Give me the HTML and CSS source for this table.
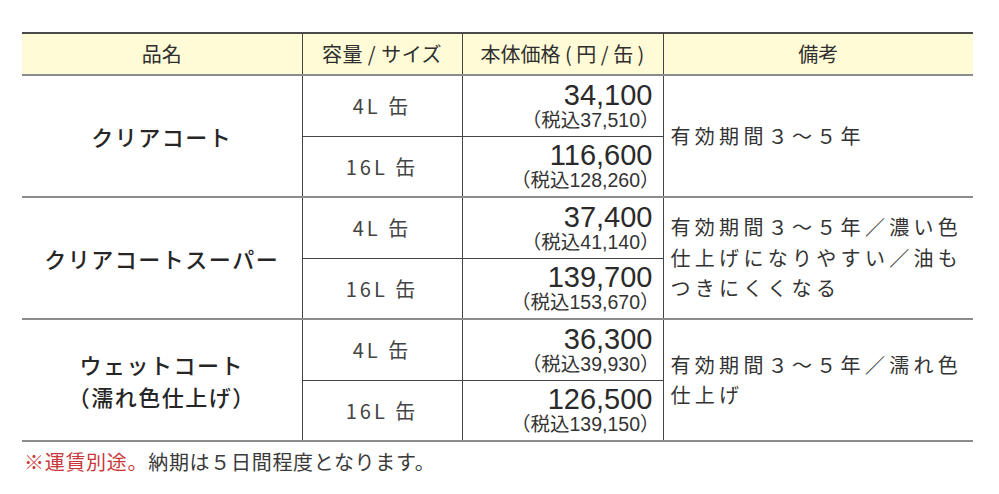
FILE: index.html
```html
<!DOCTYPE html>
<html lang="ja">
<head>
<meta charset="utf-8">
<link rel="stylesheet" href="styles.css">
</head>
<body>
<table class="price-table">
  <colgroup>
    <col class="c-name"><col class="c-size"><col class="c-price"><col class="c-note">
  </colgroup>
  <thead>
    <tr>
      <th>品名</th>
      <th class="th-size">容量 / サイズ</th>
      <th class="th-price">本体価格 ( 円 / 缶 )</th>
      <th>備考</th>
    </tr>
  </thead>
  <tbody class="group">
    <tr>
      <td class="name" rowspan="2">クリアコート</td>
      <td class="size">4L 缶</td>
      <td class="price"><div class="main">34,100</div><div class="tax">（税込37,510）</div></td>
      <td class="note" rowspan="2">有効期間３～５年</td>
    </tr>
    <tr class="sub">
      <td class="size">16L 缶</td>
      <td class="price"><div class="main">116,600</div><div class="tax">（税込128,260）</div></td>
    </tr>
  </tbody>
  <tbody class="group">
    <tr>
      <td class="name" rowspan="2">クリアコートスーパー</td>
      <td class="size">4L 缶</td>
      <td class="price"><div class="main">37,400</div><div class="tax">（税込41,140）</div></td>
      <td class="note" rowspan="2">有効期間３～５年／濃い色仕上げになりやすい／油もつきにくくなる</td>
    </tr>
    <tr class="sub">
      <td class="size">16L 缶</td>
      <td class="price"><div class="main">139,700</div><div class="tax">（税込153,670）</div></td>
    </tr>
  </tbody>
  <tbody class="group">
    <tr>
      <td class="name" rowspan="2">ウェットコート<br>（濡れ色仕上げ）</td>
      <td class="size">4L 缶</td>
      <td class="price"><div class="main">36,300</div><div class="tax">（税込39,930）</div></td>
      <td class="note" rowspan="2">有効期間３～５年／濡れ色仕上げ</td>
    </tr>
    <tr class="sub">
      <td class="size">16L 缶</td>
      <td class="price"><div class="main">126,500</div><div class="tax">（税込139,150）</div></td>
    </tr>
  </tbody>
</table>
<p class="footnote"><span class="red">※運賃別途。</span>納期は５日間程度となります。</p>
</body>
</html>
```

FILE: styles.css
```css
html, body {
  margin: 0;
  background: #ffffff;
}
body {
  padding: 32px 26px 0 22px;
  font-family: "Noto Sans CJK JP", "Noto Sans", sans-serif;
  color: #333333;
}
.price-table {
  width: 951px;
  border-collapse: collapse;
  table-layout: fixed;
}
.c-name { width: 280px; }
.c-size { width: 160px; }
.c-price { width: 201px; }
.c-note { width: 310px; }

.price-table th {
  background: #fffbd6;
  height: 40px;
  padding: 0;
  font-weight: 400;
  font-size: 20px;
  color: #2e2e2e;
  border-top: 2px solid #4a4a4a;
  border-bottom: 2px solid #8c8c8c;
  border-left: 1px solid #444;
  text-align: center;
  vertical-align: middle;
  line-height: 1;
}
.price-table th:first-child { border-left: none; }
.th-size { letter-spacing: 0.5px; }
.th-price { letter-spacing: 0; }

.price-table td {
  padding: 0;
  border-left: 1px solid #444;
  vertical-align: middle;
}
.price-table td.name { border-left: none; }
.group { border-bottom: 2px solid #8c8c8c; }
.group tr { height: 61px; }
.group tr.sub td { border-top: 1px solid #444; }

.name {
  text-align: center;
  font-size: 22px;
  font-weight: 500;
  line-height: 32px;
  color: #262626;
  letter-spacing: 1.5px;
}
.size {
  text-align: center;
  font-size: 20px;
  color: #444;
  letter-spacing: 3px;
  padding-bottom: 2px;
}
.price {
  text-align: right;
  padding-right: 9px !important;
}
.price .main {
  font-family: "Liberation Sans", Arial, sans-serif;
  font-size: 29px;
  line-height: 29px;
  color: #2a2a2a;
  margin-right: 1px;
}
.price .tax {
  font-family: "Liberation Sans", "Noto Sans CJK JP", sans-serif;
  font-size: 19.5px;
  line-height: 21px;
  color: #333;
  margin-right: -6px;
}
.note {
  padding-left: 7px !important;
  padding-right: 2px !important;
  font-size: 20px;
  letter-spacing: 4.3px;
  line-height: 30.5px;
  color: #333;
}
.footnote {
  margin: 5px 0 0 2px;
  font-size: 20px;
  letter-spacing: 0.7px;
  color: #3a3a3a;
}
.red { color: #c8383b; }
```
